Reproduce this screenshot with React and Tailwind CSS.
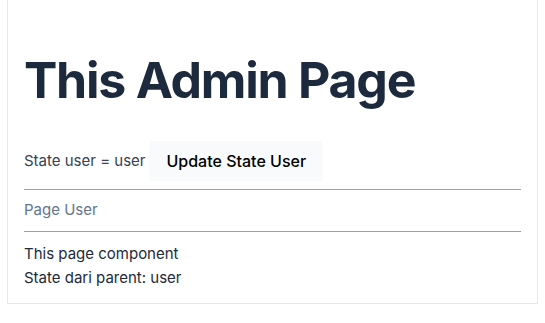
import React from 'react';

export default function App() {
    return (
        <div className="bg-white min-h-screen pl-[7px] pr-[7px]" style={{ fontFamily: 'Inter, "Noto Sans", sans-serif' }}>
            <div className="border border-t-0 border-gray-200 h-[304px] px-4 pt-[55px]">
                <h1 className="text-[50px] leading-none font-bold text-slate-800 tracking-tight">This Admin Page</h1>

                {/* state row */}
                <div className="flex items-center mt-[36px] h-[40px]">
                    <span className="text-[15px] text-gray-700">State user = user</span>
                    <button className="ml-[4px] h-[40px] px-[17px] bg-gray-50 text-base font-medium text-black">
                        Update State User
                    </button>
                </div>

                <div className="border-t border-gray-400 mt-[8px]"></div>
                <div className="text-[15px] text-slate-500 h-[41px] flex items-center">Page User</div>
                <div className="border-t border-gray-400"></div>

                <div className="text-[15px] text-gray-800 mt-[10px] leading-[24px]">
                    <p>This page component</p>
                    <p>State dari parent: user</p>
                </div>
            </div>
        </div>
    );
}
